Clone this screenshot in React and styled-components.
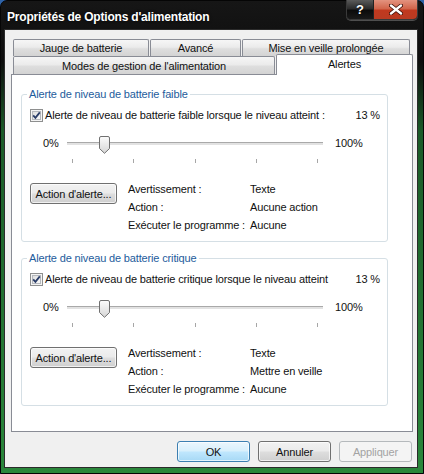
import styled, { createGlobalStyle } from "styled-components"

const GlobalStyle = createGlobalStyle`
  html, body {
    margin: 0;
    padding: 0;
    background: #2f63a8;
  }
  * {
    box-sizing: border-box;
  }
`;

const Window = styled.div`
  width: 424px;
  height: 474px;
  border: 1px solid #050505;
  border-radius: 7px 7px 0 0;
  padding: 0 5px 5px 3px;
  display: flex;
  flex-direction: column;
  background: linear-gradient(180deg, #161616 0px, #0d0d0d 60px, #1b5a28 130px, #2a873b 474px);
  font-family: "Liberation Sans", Arial, sans-serif;
  font-size: 11px;
  letter-spacing: -0.15px;
  color: #111;
`;

const TitleBar = styled.div`
  height: 28px;
  display: flex;
  justify-content: space-between;
  align-items: flex-start;
  padding-left: 3px;
`;

const Title = styled.div`
  margin-top: 9px;
  font-weight: bold;
  font-size: 12px;
  letter-spacing: -0.2px;
  color: #fff;
  text-shadow: 0 0 3px rgba(0, 0, 0, 0.8);
`;

const CaptionButtons = styled.div`
  display: flex;
  margin-top: -1px;
  border: 1px solid #3a3a3a;
  border-top: none;
  border-radius: 0 0 5px 5px;
  overflow: hidden;
  box-shadow: 0 1px 0 rgba(255, 255, 255, 0.25);
`;

const CaptionButton = styled.div`
  width: ${props => props.width}px;
  height: 19px;
  display: flex;
  align-items: center;
  justify-content: center;
  color: #fff;
  font-weight: bold;
  font-size: 13px;
  text-shadow: 0 0 2px #000;
  background: ${props => props.close
    ? "linear-gradient(180deg, #e3937f 0%, #d2664c 45%, #c0391f 55%, #b93b22 100%)"
    : "linear-gradient(180deg, #5a5a5a 0%, #2c2c2c 45%, #0b0b0b 55%, #1a1a1a 100%)"};
  border-left: ${props => props.close ? "1px solid #222" : "none"};
`;

const Client = styled.div`
  flex: 1;
  border: 1px solid #2b2b2b;
  background: #f0f0f0;
  padding: 9px 4px 5px 6px;
  display: flex;
  flex-direction: column;
`;

const TabRow = styled.div`
  display: flex;
  align-items: flex-end;
  gap: 1px;
  margin-left: 2px;
  height: ${props => props.height}px;
`;

const Tab = styled.div`
  width: ${props => props.width}px;
  height: ${props => props.active ? 21 : props.height}px;
  display: flex;
  align-items: center;
  justify-content: center;
  padding-bottom: ${props => props.active ? 3 : 0}px;
  border: 1px solid #898c95;
  border-bottom: none;
  border-radius: 2px 2px 0 0;
  position: relative;
  z-index: ${props => props.active ? 2 : 0};
  margin-bottom: ${props => props.active ? -1 : 0}px;
  background: ${props => props.active
    ? "#fff"
    : "linear-gradient(180deg, #f6f6f6 0%, #ebebeb 45%, #dedede 55%, #d3d3d3 100%)"};
  white-space: nowrap;
`;

const Panel = styled.div`
  height: 358px;
  border: 1px solid #898c95;
  background: #fff;
  padding: 13px 0 0 9px;
  display: flex;
  flex-direction: column;
  gap: 10px;
`;

const Group = styled.fieldset`
  width: 367px;
  margin: 0;
  min-inline-size: 0;
  border: 1px solid #d5dfe5;
  border-radius: 3px;
  padding: 7px 7px 7px 8px;
  display: flex;
  flex-direction: column;
`;

const Legend = styled.legend`
  padding: 0 2px;
  margin-left: -3px;
  line-height: 13px;
  color: #1e5c9c;
`;

const CheckRow = styled.div`
  height: 14px;
  display: flex;
  align-items: center;
  gap: 2px;
`;

const CheckLabel = styled.span`
  flex: 1;
  white-space: nowrap;
`;

const SliderRow = styled.div`
  margin-top: 11px;
  height: 20px;
  display: flex;
  align-items: center;
  padding-left: 13px;
`;

const SliderLabel = styled.span`
  width: ${props => props.width || "auto"};
  margin-left: ${props => props.gap || 0}px;
`;

const Track = styled.div`
  position: relative;
  width: 256px;
  height: 20px;
  &::before {
    content: "";
    position: absolute;
    left: 0;
    right: 0;
    top: 9px;
    height: 2px;
    background: #e2e2e2;
    border-top: 1px solid #a9a9a9;
  }
`;

const Thumb = styled.svg`
  position: absolute;
  top: 3px;
`;

const TickRow = styled.div`
  margin-top: 6px;
  margin-left: 37px;
  width: 256px;
  height: 4px;
  padding: 0 5px;
  display: flex;
  justify-content: space-between;
`;

const Tick = styled.div`
  width: 1px;
  height: 4px;
  background: #a6a6a6;
`;

const ActionRow = styled.div`
  margin-top: 17px;
  display: flex;
  align-items: flex-start;
`;

const Button = styled.div`
  width: ${props => props.width}px;
  height: 21px;
  margin-top: ${props => props.offset || 0}px;
  display: flex;
  align-items: center;
  justify-content: center;
  border: 1px solid ${props => props.disabled ? "#b5b9bc" : props.primary ? "#3c7fb1" : "#707070"};
  border-radius: 3px;
  color: ${props => props.disabled ? "#a3a3a3" : "#111"};
  background: ${props => props.disabled
    ? "#f4f4f4"
    : props.primary
      ? "linear-gradient(180deg, #eaf6fd 0%, #d9f0fc 45%, #bee6fd 55%, #a7d9f5 100%)"
      : "linear-gradient(180deg, #f2f2f2 0%, #ebebeb 45%, #dddddd 55%, #cfcfcf 100%)"};
  box-shadow: ${props => props.disabled ? "none" : "inset 0 0 0 1px rgba(255, 255, 255, 0.7)"};
  white-space: nowrap;
`;

const InfoGrid = styled.div`
  margin-left: 11px;
  display: grid;
  grid-template-columns: 122px auto;
  line-height: 18px;
  white-space: nowrap;
`;

const ButtonBar = styled.div`
  margin-top: 9px;
  margin-right: 1px;
  display: flex;
  justify-content: flex-end;
  gap: 8px;
`;

const CheckBox = () => (
  <svg width="13" height="13" viewBox="0 0 13 13">
    <defs>
      <linearGradient id="cb" x1="0" y1="0" x2="1" y2="1">
        <stop offset="0" stopColor="#dcdcdc" />
        <stop offset="1" stopColor="#fbfbfb" />
      </linearGradient>
    </defs>
    <rect x="0.5" y="0.5" width="12" height="12" fill="#f4f4f4" stroke="#8e8f8f" />
    <rect x="2.5" y="2.5" width="8" height="8" fill="url(#cb)" stroke="#b5b8bd" />
    <path d="M3.2 6.4 L5.4 8.8 L9.8 3.4" fill="none" stroke="#2a3d68" strokeWidth="1.8" />
  </svg>
);

const SliderThumb = ({ value }) => (
  <Thumb width="11" height="18" viewBox="0 0 11 18" style={{ left: Math.round((value / 100) * (256 - 11)) }}>
    <defs>
      <linearGradient id="th" x1="0" y1="0" x2="0" y2="1">
        <stop offset="0" stopColor="#fcfcfc" />
        <stop offset="1" stopColor="#d6d6d6" />
      </linearGradient>
    </defs>
    <path d="M0.5 2 Q0.5 0.5 2 0.5 H9 Q10.5 0.5 10.5 2 V12.5 L5.5 17.3 L0.5 12.5 Z" fill="url(#th)" stroke="#707070" />
  </Thumb>
);

const alerts = [
  {
    title: "Alerte de niveau de batterie faible",
    check: "Alerte de niveau de batterie faible lorsque le niveau atteint :",
    level: 13,
    warning: "Texte",
    action: "Aucune action",
    program: "Aucune",
  },
  {
    title: "Alerte de niveau de batterie critique",
    check: "Alerte de niveau de batterie critique lorsque le niveau atteint",
    level: 13,
    warning: "Texte",
    action: "Mettre en veille",
    program: "Aucune",
  },
];

const AlertGroup = ({ alert }) => (
  <Group>
    <Legend>{alert.title}</Legend>
    <CheckRow>
      <CheckBox />
      <CheckLabel>{alert.check}</CheckLabel>
      <span>{alert.level} %</span>
    </CheckRow>
    <SliderRow>
      <SliderLabel width="24px">0%</SliderLabel>
      <Track>
        <SliderThumb value={alert.level} />
      </Track>
      <SliderLabel gap={12}>100%</SliderLabel>
    </SliderRow>
    <TickRow>
      {[0, 25, 50, 75, 100].map(t => <Tick key={t} />)}
    </TickRow>
    <ActionRow>
      <Button width={87} offset={3}>Action d'alerte...</Button>
      <InfoGrid>
        <span>Avertissement :</span>
        <span>{alert.warning}</span>
        <span>Action :</span>
        <span>{alert.action}</span>
        <span>Exécuter le programme :</span>
        <span>{alert.program}</span>
      </InfoGrid>
    </ActionRow>
  </Group>
);

export default function App() {
  return (
    <Window>
      <GlobalStyle />
      <TitleBar>
        <Title>Propriétés de Options d'alimentation</Title>
        <CaptionButtons>
          <CaptionButton width={26}>?</CaptionButton>
          <CaptionButton width={44} close>
            <svg width="14" height="11" viewBox="0 0 14 11">
              <path d="M2 1.5 L12 9.5 M12 1.5 L2 9.5" stroke="#3a0c04" strokeWidth="4" strokeLinecap="round" />
              <path d="M2 1.5 L12 9.5 M12 1.5 L2 9.5" stroke="#fff" strokeWidth="2.4" strokeLinecap="round" />
            </svg>
          </CaptionButton>
        </CaptionButtons>
      </TitleBar>
      <Client>
        <TabRow height={17}>
          <Tab width={136} height={17}>Jauge de batterie</Tab>
          <Tab width={91} height={17}>Avancé</Tab>
          <Tab width={168} height={17}>Mise en veille prolongée</Tab>
        </TabRow>
        <TabRow height={18}>
          <Tab width={262} height={18}>Modes de gestion de l'alimentation</Tab>
          <Tab width={137} active>Alertes</Tab>
        </TabRow>
        <Panel>
          {alerts.map(a => <AlertGroup key={a.title} alert={a} />)}
        </Panel>
        <ButtonBar>
          <Button width={73} primary>OK</Button>
          <Button width={73}>Annuler</Button>
          <Button width={73} disabled>Appliquer</Button>
        </ButtonBar>
      </Client>
    </Window>
  )
}
